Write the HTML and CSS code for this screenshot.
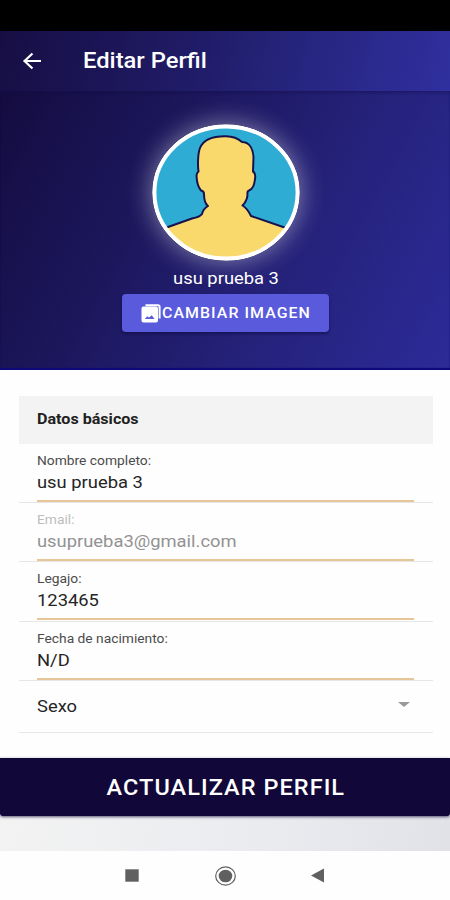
FILE: index.html
```html
<!DOCTYPE html>
<html lang="es">
<head>
<meta charset="utf-8">
<title>Editar Perfil</title>
<link rel="stylesheet" href="styles.css">
</head>
<body>
<div class="status"></div>
<header class="toolbar">
  <svg class="back" width="20" height="18" viewBox="0 0 20 18"><path d="M19 9H2.500M10.500 1.500L2.500 9l8 7.500" fill="none" stroke="#fff" stroke-width="2.200"/></svg>
  <h1 class="wide">Editar Perfil</h1>
</header>
<section class="hero">
  <svg class="avatar" width="148" height="137" viewBox="0 0 148 137">
    <defs><clipPath id="c"><ellipse cx="74" cy="68.500" rx="71" ry="65.500"/></clipPath></defs>
    <ellipse cx="74" cy="68.500" rx="71" ry="65.500" fill="#2eacd4"/>
    <path clip-path="url(#c)" d="M-10 113L16 103L40 94.500Q48 93 50 90Q51 85 56 82Q52 79 52 70Q52 67 49 66.500Q45 62 44.500 52Q44.500 49 46.500 47.500C45.500 41 46 29 48 24Q53 12 74 12.300Q84 12.500 90 18C98 18 101 26 101.500 33L101 47.500Q104 49 103 55Q102 65 97 66.500Q95 67 95.500 71Q95 77 90.500 81.500Q95 84 99 92L134 104L158 112V150H-10Z" fill="#f9d96c" stroke="#17124f" stroke-width="2" stroke-linejoin="round"/>
    <ellipse cx="74" cy="68.500" rx="71.700" ry="66.200" fill="none" stroke="#fff" stroke-width="4.200"/>
  </svg>
  <p class="name wide">usu prueba 3</p>
  <button class="change">
    <svg width="20" height="19" viewBox="0 0 20 19"><path d="M4.500 1.200H17Q18.600 1.200 18.600 2.700V14.500" fill="none" stroke="#fff" stroke-width="2"/><path fill="#fff" fill-rule="evenodd" d="M2.500 2.600H15Q17 2.600 17 4.600V16.500Q17 18.500 15 18.500H2.500Q.5 18.500 .5 16.500V4.600Q.5 2.600 2.500 2.600ZM3.800 15H13.500L10.800 11.200L8 13.500L6.200 12.200Z"/></svg>
    <span class="wide">CAMBIAR IMAGEN</span>
  </button>
</section>
<main>
  <h2><span class="wide">Datos básicos</span></h2>
  <div class="field"><div class="inner"><label class="wide">Nombre completo:</label><span class="wide value">usu prueba 3</span></div></div>
  <div class="field disabled"><div class="inner"><label class="wide">Email:</label><span class="wide value">usuprueba3@gmail.com</span></div></div>
  <div class="field"><div class="inner"><label class="wide">Legajo:</label><span class="wide value">123465</span></div></div>
  <div class="field"><div class="inner"><label class="wide">Fecha de nacimiento:</label><span class="wide value">N/D</span></div></div>
  <div class="select"><span class="wide">Sexo</span><i class="caret"></i></div>
</main>
<button class="submit"><span class="wide">ACTUALIZAR PERFIL</span></button>
<div class="backdrop"></div>
<nav>
  <svg width="14" height="13" viewBox="0 0 14 13"><path fill="#606060" d="M.3.300h13.400v12.400H.3z"/></svg>
  <svg width="22" height="20" viewBox="0 0 22 20"><ellipse cx="10.500" cy="10" rx="9.800" ry="9.100" fill="none" stroke="#606060" stroke-width="1.200"/><ellipse cx="10.500" cy="10" rx="6.800" ry="6.300" fill="#606060"/></svg>
  <svg width="14" height="15" viewBox="0 0 14 15"><path fill="#606060" d="M0 7.500L13 .5v14z"/></svg>
</nav>
</body>
</html>
```
FILE: styles.css
```css
* { box-sizing: border-box; margin: 0; padding: 0; }
body { width: 450px; height: 900px; display: flex; flex-direction: column; overflow: hidden; background: #fefefe; color: #252525; font-family: Roboto, sans-serif; }
button { border: 0; color: #fff; font-family: inherit; }
svg { display: block; flex: none; }
.wide { display: block; white-space: nowrap; transform: scaleX(1.08); transform-origin: left center; width: max-content; }
.status { height: 31px; background: #000; flex: none; }
.toolbar { height: 60px; flex: none; display: flex; align-items: center; padding-left: 22px; background: linear-gradient(105deg, #160e43 0%, #201b66 42%, #242378 60%, #302f9f 100%); color: #fff; }
.toolbar h1 { margin-left: 41px; font-size: 22px; line-height: 26px; font-weight: 500; }
.hero { height: 279px; flex: none; display: flex; flex-direction: column; align-items: center; padding-top: 33px; background: linear-gradient(118deg, #140c40 0%, #1c175c 33%, #25227b 65%, #2c2b98 100%); box-shadow: inset 0 3px 3px -1px #130c4666, inset 0 -2px 1px #0d087b; color: #fff; }
.avatar { border-radius: 50%; box-shadow: 0 0 26px #ffffff78; margin-left: 2px; }
.hero .wide { transform-origin: center; }
.name { margin: 6px 0 0 1px; font-size: 17px; line-height: 22px; }
.change { margin-top: 5px; width: 207px; height: 38px; display: flex; align-items: center; padding-left: 19px; border-radius: 4px; background: #5a5bdc; box-shadow: 0 2px 3px #0b083c80; font-size: 15px; font-weight: 500; letter-spacing: 1px; }
.change .wide { margin-left: 1.5px; transform: scaleX(1.06); transform-origin: left; }
main { height: 388px; flex: none; margin: 0 17px 0 19px; padding-top: 26px; }
h2 { height: 48px; display: flex; align-items: center; padding: 0 0 2px 18px; background: #f3f3f3; font-size: 14px; font-weight: 700; color: #202020; }
h2 .wide { transform: scaleX(1.15); }
.field { height: 59.2px; padding: 0 19px 0 18px; border-bottom: 1px solid #e6e6e6; }
.inner { height: 58px; padding-top: 10px; border-bottom: 2px solid #e6c698; }
label.wide { font-size: 12px; line-height: 15px; color: #4b4b4b; transform: scaleX(1.15); }
.value { font-size: 17px; line-height: 20px; margin-top: 3px; }
.disabled label.wide { color: #bdbdbd; }
.disabled .value { color: #929292; }
.select { height: 52px; display: flex; align-items: center; justify-content: space-between; padding: 0 23px 0 18px; border-bottom: 1px solid #e8e8e8; font-size: 17px; }
.caret { border: 6px solid transparent; border-bottom: 0; border-top: 5px solid #999; margin-bottom: 3px; }
.submit { height: 58px; flex: none; display: flex; justify-content: center; align-items: center; background: #110739; font-size: 22px; font-weight: 500; letter-spacing: 1px; box-shadow: 0 1px 3px #110739aa; border-radius: 0 0 3px 3px; position: relative; }
.submit .wide { transform: scaleX(1.067); transform-origin: center; margin-left: 1px; }
.backdrop { height: 35px; flex: none; background: linear-gradient(100deg, #f3f3f3, #e9ebef 60%, #e1e2e7); }
nav { height: 49px; flex: none; display: flex; align-items: center; padding-left: 125px; background: #fefefe; }
nav svg + svg { margin-left: 76px; }
nav svg:last-child { margin-left: 74px; }
```
